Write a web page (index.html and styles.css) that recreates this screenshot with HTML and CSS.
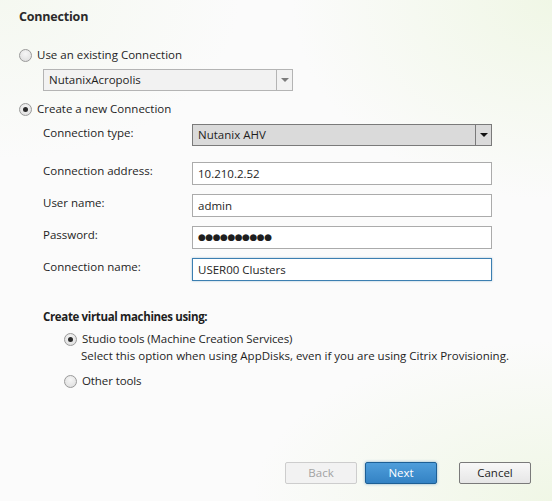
FILE: index.html
```html
<!DOCTYPE html>
<html>
<head>
<meta charset="utf-8">
<link rel="stylesheet" href="styles.css">
</head>
<body>
<div class="page">
  <div class="content">
    <h1 class="title">Connection</h1>

    <label class="radio-row first">
      <span class="radio"></span>
      <span>Use an existing Connection</span>
    </label>
    <div class="select select-existing">
      <span class="select-text">NutanixAcropolis</span>
      <span class="select-btn"><span class="tri tri-gray"></span></span>
    </div>

    <label class="radio-row second">
      <span class="radio checked"></span>
      <span>Create a new Connection</span>
    </label>

    <div class="form">
      <div class="field type-row">
        <span class="label">Connection type:</span>
        <div class="select select-type">
          <span class="select-text">Nutanix AHV</span>
          <span class="select-btn dark"><span class="tri"></span></span>
        </div>
      </div>
      <div class="field addr-row">
        <span class="label">Connection address:</span>
        <div class="input">10.210.2.52</div>
      </div>
      <div class="field">
        <span class="label">User name:</span>
        <div class="input">admin</div>
      </div>
      <div class="field">
        <span class="label">Password:</span>
        <div class="input pw">●●●●●●●●●●</div>
      </div>
      <div class="field">
        <span class="label">Connection name:</span>
        <div class="input focus">USER00 Clusters</div>
      </div>

      <div class="vm">
        <div class="vm-title">Create virtual machines using:</div>
        <div class="vm-options">
          <label class="radio-row">
            <span class="radio checked"></span>
            <span>Studio tools (Machine Creation Services)</span>
          </label>
          <div class="hint">Select this option when using AppDisks, even if you are using Citrix Provisioning.</div>
          <label class="radio-row other">
            <span class="radio"></span>
            <span>Other tools</span>
          </label>
        </div>
      </div>
    </div>
  </div>

  <div class="buttons">
    <button class="btn disabled">Back</button>
    <button class="btn primary">Next</button>
    <button class="btn cancel">Cancel</button>
  </div>
</div>
</body>
</html>
```
FILE: styles.css
```css
html, body {
  margin: 0;
  padding: 0;
}
body {
  width: 552px;
  height: 501px;
  overflow: hidden;
  font-family: "Open Sans", "Noto Sans", sans-serif;
  font-size: 11.5px;
  color: #1e1e1e;
  background:
    radial-gradient(ellipse 260px 200px at 100% 0%, rgba(238, 246, 226, 0.85), rgba(238, 246, 226, 0) 100%),
    radial-gradient(ellipse 300px 160px at 100% 100%, rgba(238, 246, 226, 0.85), rgba(238, 246, 226, 0) 100%),
    radial-gradient(ellipse 240px 160px at 0% 0%, rgba(242, 247, 236, 0.7), rgba(242, 247, 236, 0) 100%),
    #fbfbfb;
}
.page {
  height: 501px;
  display: flex;
  flex-direction: column;
  justify-content: space-between;
}
.content {
  padding-left: 19px;
  display: flex;
  flex-direction: column;
}
.title {
  margin: 9px 0 0 0;
  font-size: 12.5px;
  font-weight: 700;
  letter-spacing: -0.2px;
  line-height: 16px;
  color: #2a2a2a;
}
.radio-row {
  display: flex;
  align-items: center;
  gap: 5px;
  height: 16px;
  line-height: 16px;
}
.radio-row.first {
  margin-top: 22px;
}
.radio-row.second {
  margin-top: 10px;
}
.radio {
  width: 11px;
  height: 11px;
  border-radius: 50%;
  border: 1px solid #9a9a9a;
  background: radial-gradient(circle at 50% 35%, #f6f6f6 0%, #e3e3e3 70%, #d4d4d4 100%);
  position: relative;
  flex: none;
}
.radio.checked::after {
  content: "";
  position: absolute;
  left: 3px;
  top: 3px;
  width: 5px;
  height: 5px;
  border-radius: 50%;
  background: #2b2b2b;
}
.select {
  display: flex;
  align-items: stretch;
  box-sizing: border-box;
  height: 22px;
}
.select-existing {
  margin: 6px 0 0 24px;
  width: 250px;
  height: 22px;
  border: 1px solid #b4b4b4;
  background: #f2f2f2;
}
.select-text {
  flex: 1;
  padding-left: 5px;
  line-height: 20px;
}
.select-btn {
  width: 15px;
  border-left: 1px solid #b4b4b4;
  display: flex;
  align-items: center;
  justify-content: center;
}
.select-btn.dark {
  border-left-color: #7a7a7a;
}
.tri {
  width: 0;
  height: 0;
  border-left: 4px solid transparent;
  border-right: 4px solid transparent;
  border-top: 4px solid #111;
}
.tri-gray {
  border-top-color: #7c7c7c;
}
.form {
  margin: 7px 0 0 24px;
  display: flex;
  flex-direction: column;
}
.field {
  display: flex;
  align-items: flex-start;
  margin-bottom: 9px;
}
.field.type-row {
  margin-bottom: 16px;
}
.label {
  width: 149px;
  padding-top: 1px;
  line-height: 16px;
  flex: none;
}
.select-type {
  width: 300px;
  height: 22px;
  border: 1px solid #7a7a7a;
  background: #dadada;
}
.input {
  width: 300px;
  height: 23px;
  box-sizing: border-box;
  border: 1px solid #ababab;
  background: #fff;
  padding-left: 5px;
  line-height: 21px;
}
.input.pw {
  font-family: "DejaVu Sans", sans-serif;
  font-size: 9px;
  letter-spacing: -0.5px;
  line-height: 21px;
}
.input.focus {
  border: 1px solid #3c7fb1;
  box-shadow: 0 0 2px rgba(60, 127, 177, 0.45);
}
.vm {
  margin-top: 19px;
  display: flex;
  flex-direction: column;
}
.vm-title {
  font-weight: 700;
  letter-spacing: -0.35px;
  line-height: 16px;
}
.vm-options {
  margin: 6px 0 0 21px;
  display: flex;
  flex-direction: column;
}
.vm-options .radio-row span:last-child {
  letter-spacing: -0.1px;
}
.hint {
  margin-left: 17px;
  line-height: 18px;
}
.radio-row.other {
  margin-top: 8px;
}
.buttons {
  display: flex;
  justify-content: flex-end;
  padding: 0 21px 17px 0;
  gap: 8px;
}
.btn {
  width: 72px;
  height: 22px;
  box-sizing: border-box;
  font-family: inherit;
  font-size: 11.5px;
  padding: 0;
  border-radius: 2px;
  line-height: 18px;
}
.btn.disabled {
  border: 1px solid #cdcdcd;
  background: #f2f2f2;
  color: #a3a3a3;
}
.btn.primary {
  border: 1px solid #1d5f95;
  background: linear-gradient(#4f9edb, #3382c4);
  color: #fff;
  box-shadow: 0 0 3px rgba(40, 110, 170, 0.55);
}
.btn.cancel {
  margin-left: 14px;
  border: 1px solid #7a7a7a;
  background: linear-gradient(#f8f8f8, #e6e6e6);
  color: #1e1e1e;
}
```
